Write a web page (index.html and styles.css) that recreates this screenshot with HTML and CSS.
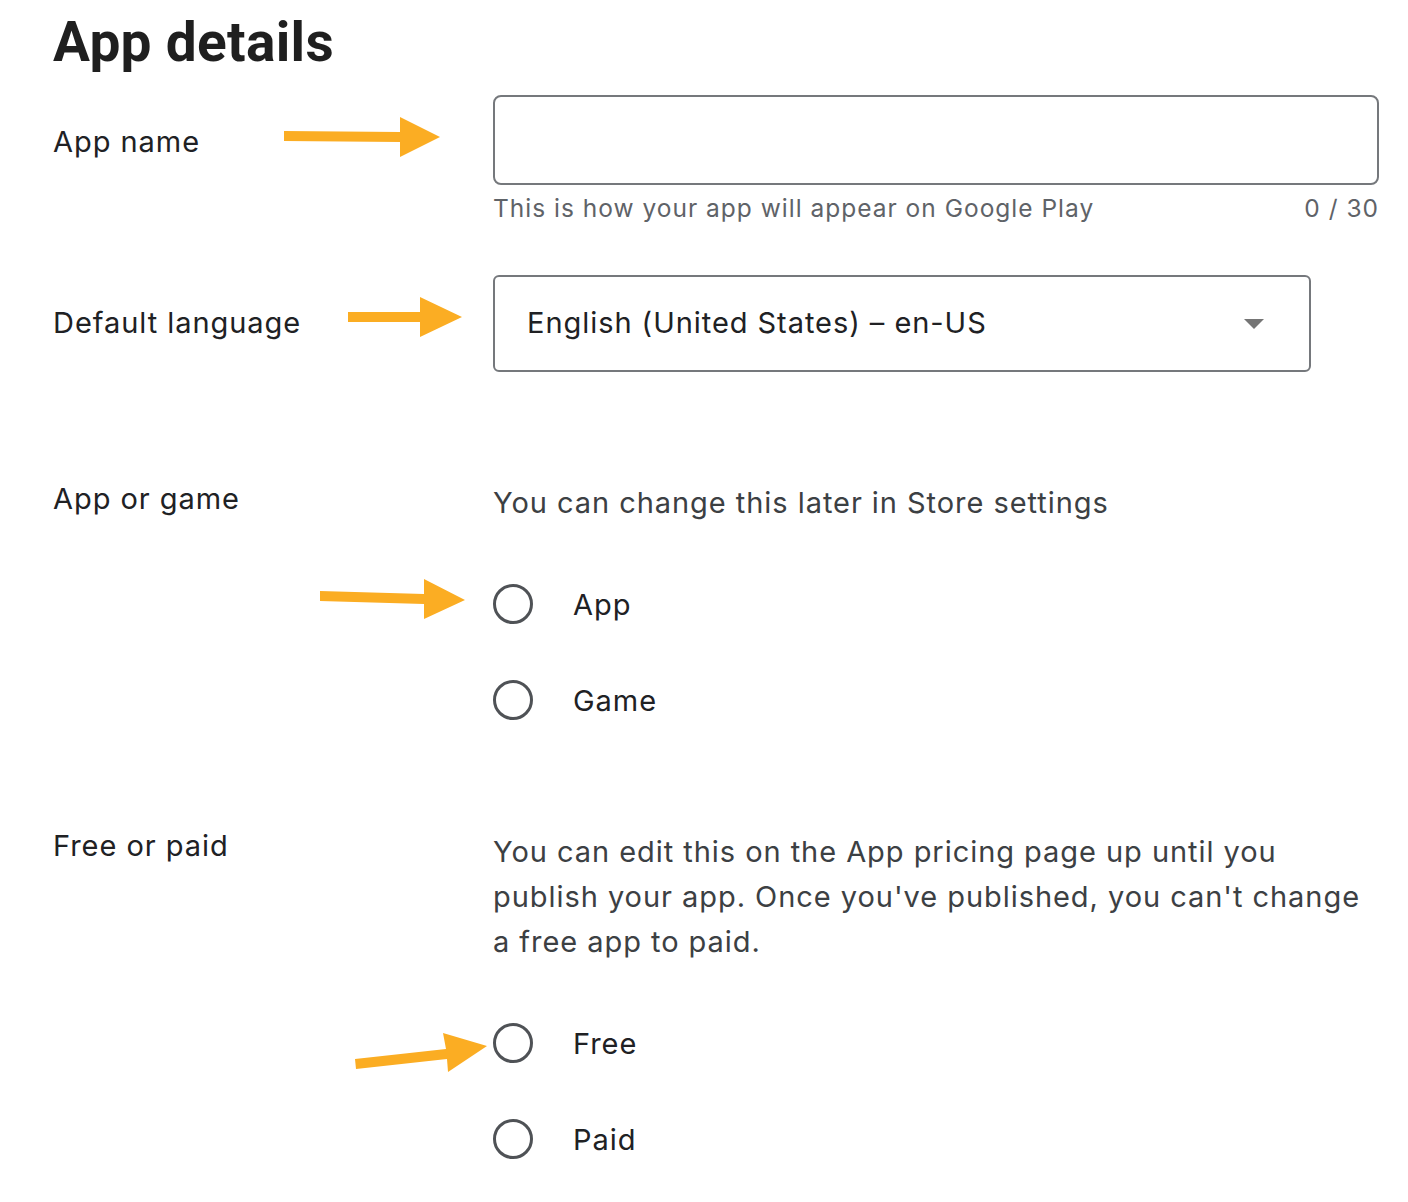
FILE: index.html
```html
<!DOCTYPE html>
<html lang="en">
<head>
<meta charset="utf-8">
<title>App details</title>
<link rel="stylesheet" href="styles.css">
</head>
<body>
<main class="page">
  <h1 class="title">App details</h1>

  <section class="row row-name">
    <div class="label">App name</div>
    <div class="field">
      <div class="input"></div>
      <div class="hint"><span>This is how your app will appear on Google Play</span><span>0 / 30</span></div>
    </div>
  </section>

  <section class="row row-lang">
    <div class="label">Default language</div>
    <div class="field">
      <div class="select">
        <span>English (United States) – en-US</span>
        <span class="caret"></span>
      </div>
    </div>
  </section>

  <section class="row row-type">
    <div class="label">App or game</div>
    <div class="field">
      <p class="desc">You can change this later in Store settings</p>
      <div class="radios">
        <div class="radio"><span class="circle"></span><span>App</span></div>
        <div class="radio"><span class="circle"></span><span>Game</span></div>
      </div>
    </div>
  </section>

  <section class="row row-price">
    <div class="label">Free or paid</div>
    <div class="field">
      <p class="desc desc-wrap">You can edit this on the App pricing page up until you publish your app. Once you've published, you can't change a free app to paid.</p>
      <div class="radios">
        <div class="radio"><span class="circle"></span><span>Free</span></div>
        <div class="radio"><span class="circle"></span><span>Paid</span></div>
      </div>
    </div>
  </section>

  <svg class="arrows" width="1408" height="1202" viewBox="0 0 1408 1202" aria-hidden="true">
    <polygon points="284,131 400,132 400,117 440,137 400,157 400,142 284,141"/>
    <polygon points="348,312 420,312 420,297 462,317 420,337 420,322 348,322"/>
    <polygon points="320,591 424,594 424,579 465,600 424,619 424,604 320,601"/>
    <polygon points="355,1059 446,1049 443,1033 487,1046 448,1072 447,1059 356,1069"/>
  </svg>
</main>
</body>
</html>
```

FILE: styles.css
```css
* { box-sizing: border-box; }
html, body { margin: 0; background: #fff; }
body {
  font-family: Inter, Roboto, "Noto Sans", Arial, sans-serif;
  color: #202124;
}
.page {
  position: relative;
  width: 1408px;
  min-height: 1202px;
  padding: 10px 0 0 53px;
}
.title {
  margin: 0;
  font-family: Roboto, Arial, sans-serif;
  font-size: 55px;
  line-height: 64px;
  font-weight: 700;
  color: #1f1f1f;
  letter-spacing: 0.3px;
}
.row {
  display: grid;
  grid-template-columns: 440px 886px;
  align-items: start;
}
.label {
  font-size: 29px;
  line-height: 37px;
  letter-spacing: 0.95px;
  color: #202124;
}
.row-name { margin-top: 21px; }
.row-name .label { padding-top: 28px; }
.row-lang { margin-top: 50px; }
.row-lang .label { padding-top: 29px; }
.row-type { margin-top: 109px; }
.row-type .label { margin-top: -1px; }
.row-price { margin-top: 82px; }
.row-price .label { margin-top: -3px; }

.input {
  height: 90px;
  border: 2px solid #75787c;
  border-radius: 8px;
}
.hint {
  display: flex;
  justify-content: space-between;
  margin-top: 8px;
  font-size: 24.5px;
  line-height: 31px;
  color: #5f6368;
  letter-spacing: 1px;
}
.select {
  width: 818px;
  height: 97px;
  border: 2px solid #75787c;
  border-radius: 6px;
  display: flex;
  align-items: center;
  justify-content: space-between;
  padding: 0 45px 2px 32px;
  font-size: 29px;
  line-height: 37px;
  letter-spacing: 0.95px;
  color: #202124;
}
.row-lang { margin-top: 51px; }
.caret {
  width: 0;
  height: 0;
  border-left: 10px solid transparent;
  border-right: 10px solid transparent;
  border-top: 10px solid #757575;
  margin-top: 2px;
}
.desc {
  margin: -1px 0 0;
  font-size: 29px;
  line-height: 45px;
  letter-spacing: 0.95px;
  color: #3c4043;
}
.desc-wrap { max-width: 872px; }
.radios { margin-top: 31px; }
.radio {
  height: 96px;
  display: flex;
  align-items: center;
  gap: 40px;
  font-size: 29px;
  line-height: 37px;
  letter-spacing: 0.95px;
  color: #202124;
}
.circle {
  width: 40px;
  height: 40px;
  border: 3.5px solid #4f5256;
  border-radius: 50%;
  flex: none;
}
.arrows {
  position: absolute;
  left: 0;
  top: 0;
  pointer-events: none;
}
.arrows polygon { fill: #fbad23; }
```
